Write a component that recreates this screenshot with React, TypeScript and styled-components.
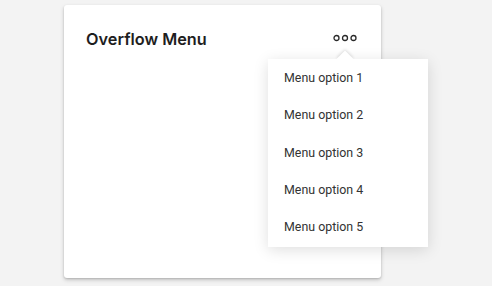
import styled, { createGlobalStyle } from "styled-components";

const GlobalStyle = createGlobalStyle`
    html, body {
        margin: 0;
        padding: 0;
        background-color: #f3f3f3;
        font-family: "Roboto", "Liberation Sans", sans-serif;
    }
`;

const options = ["Menu option 1", "Menu option 2", "Menu option 3", "Menu option 4", "Menu option 5"];

export default function App() {
    return (
        <>
            <GlobalStyle />
            <Page>
                <Card>
                    <CardHeader>
                        <Title>Overflow Menu</Title>
                        <DotsButton aria-label="More options">
                            <svg width="24" height="8" viewBox="0 0 24 8">
                                <circle cx="3.5" cy="4" r="2.5" fill="none" stroke="#2a2a2a" strokeWidth="1.3" />
                                <circle cx="12" cy="4" r="2.5" fill="none" stroke="#2a2a2a" strokeWidth="1.3" />
                                <circle cx="20.5" cy="4" r="2.5" fill="none" stroke="#2a2a2a" strokeWidth="1.3" />
                            </svg>
                        </DotsButton>
                    </CardHeader>
                    <Menu>
                        {options.map(o => (
                            <MenuItem key={o}>{o}</MenuItem>
                        ))}
                    </Menu>
                </Card>
            </Page>
        </>
    );
}

const Page = styled.div`
    padding: 5px 0 0 64px;
    height: 286px;
    box-sizing: border-box;
`;

const Card = styled.div`
    position: relative;
    width: 317px;
    height: 273px;
    background-color: #ffffff;
    border-radius: 3px;
    box-shadow: 0 1px 2px rgba(0, 0, 0, 0.14), 0 2px 4px rgba(0, 0, 0, 0.18);
    box-sizing: border-box;
    padding: 24px 24px 0 22px;
`;

const CardHeader = styled.div`
    display: flex;
    align-items: center;
    justify-content: space-between;
    height: 20px;
`;

const Title = styled.h2`
    margin: 0;
    font-family: "Inter", "Liberation Sans", sans-serif;
    font-size: 16.3px;
    font-weight: 600;
    color: #1e1e1e;
`;

const DotsButton = styled.button`
    border: none;
    background: none;
    padding: 0;
    display: flex;
    align-items: center;
    cursor: pointer;
    margin-top: -2px;
`;

const Menu = styled.ul`
    position: absolute;
    left: 204px;
    top: 54px;
    width: 160px;
    margin: 0;
    padding: 0 0 1.5px;
    list-style: none;
    background-color: #ffffff;
    box-shadow: 0 3px 14px rgba(0, 0, 0, 0.13);

    &::before {
        content: "";
        position: absolute;
        top: -6px;
        left: 71px;
        width: 12px;
        height: 12px;
        background-color: #ffffff;
        transform: rotate(45deg);
        box-shadow: -1px -1px 3px rgba(0, 0, 0, 0.12);
    }
`;

const MenuItem = styled.li`
    position: relative;
    height: 37.3px;
    display: flex;
    align-items: center;
    padding-left: 16px;
    font-size: 12.4px;
    color: #333333;
    background-color: #ffffff;
`;
